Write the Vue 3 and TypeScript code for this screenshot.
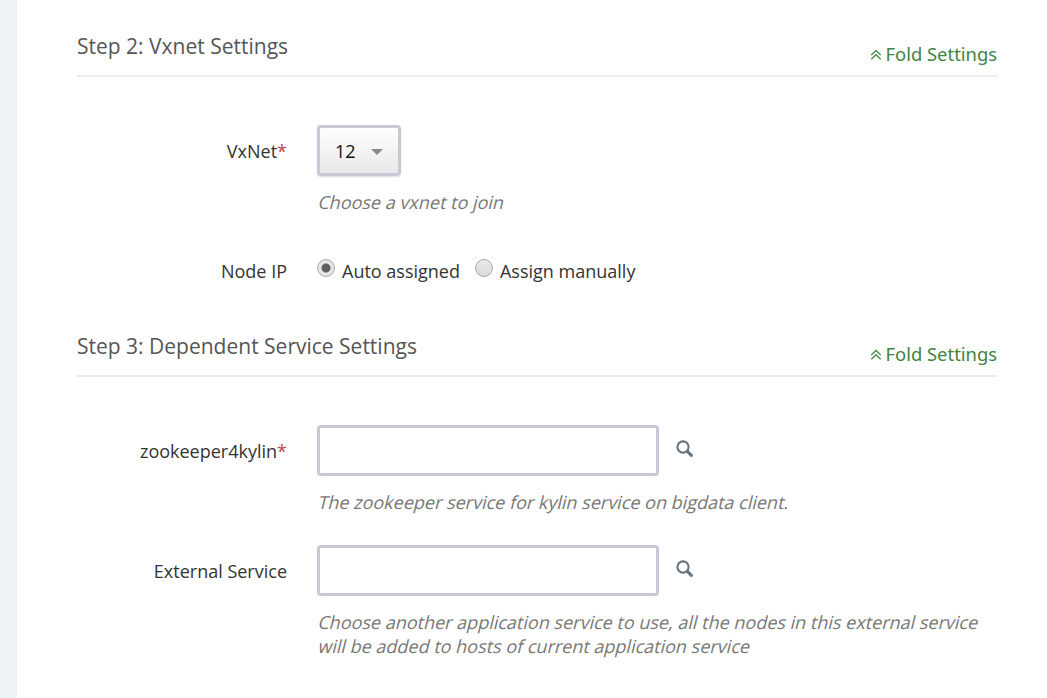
<script setup lang="ts">
interface Field { label: string; required: boolean; help: string[] }
const fields: Field[] = [
  { label: 'zookeeper4kylin', required: true, help: ['The zookeeper service for kylin service on bigdata client.'] },
  { label: 'External Service', required: false, help: ['Choose another application service to use, all the nodes in this external service', 'will be added to hosts of current application service'] },
]
</script>

<template>
  <main class="page">
    <section class="step">
      <header class="head">
        <h2>Step 2: Vxnet Settings</h2>
        <a class="fold"><svg width="12" height="12" viewBox="0 0 12 12"><path d="M1.3 6 6 1.5 10.7 6M1.3 10.3 6 5.8 10.7 10.3" /></svg>Fold Settings</a>
      </header>
      <div class="row vx">
        <label class="label">VxNet<i>*</i></label>
        <div class="control">
          <button class="select"><span>12</span><b class="caret"></b></button>
          <p class="help"><span>Choose a vxnet to join</span></p>
        </div>
      </div>
      <div class="row ip">
        <label class="label">Node IP</label>
        <div class="radios">
          <span class="radio on"></span><span class="auto">Auto assigned</span>
          <span class="radio"></span><span>Assign manually</span>
        </div>
      </div>
    </section>
    <section class="step">
      <header class="head">
        <h2>Step 3: Dependent Service Settings</h2>
        <a class="fold"><svg width="12" height="12" viewBox="0 0 12 12"><path d="M1.3 6 6 1.5 10.7 6M1.3 10.3 6 5.8 10.7 10.3" /></svg>Fold Settings</a>
      </header>
      <div v-for="f in fields" :key="f.label" class="row svc">
        <label class="label">{{ f.label }}<i v-if="f.required">*</i></label>
        <div class="control">
          <div class="line">
            <input type="text" />
            <svg class="search" width="18" height="18" viewBox="0 0 18 18"><circle cx="7" cy="7" r="5.6" /><path d="M11.6 11.6 15.4 15.4" /></svg>
          </div>
          <p class="help"><span v-for="t in f.help" :key="t">{{ t }}</span></p>
        </div>
      </div>
    </section>
  </main>
</template>

<style>
body { background: #fff; overflow: hidden; }
</style>
<style scoped>
* { box-sizing: border-box; }
.page { width: 1047px; height: 698px; border-left: 17px solid #eff3f6; padding: 0 50px 0 60px; background: #fff; overflow: hidden; font: 18px/24px "Open Sans", sans-serif; color: #333; }
.step { height: 300px; }
.head { height: 77px; border-bottom: 2px solid #ebebeb; display: flex; justify-content: space-between; align-items: flex-start; }
h2 { margin: 32px 0 0; font-size: 21px; line-height: 28px; font-weight: 400; color: #555; }
.fold { margin-top: 42px; color: #3f843f; font-family: "Noto Sans", sans-serif; font-size: 18.4px; display: flex; align-items: center; gap: 4px; }
.fold svg { margin-top: 1px; fill: none; stroke: #4b8b4b; stroke-width: 1.4; }
.row { display: flex; }
.label { width: 210px; text-align: right; margin-right: 30px; padding-top: 14px; }
.label i { font-style: normal; color: #b94a48; }
.vx { padding-top: 48px; height: 170px; }
.select { width: 84px; height: 51px; border: 3px solid #cac7d7; border-radius: 4px; background: linear-gradient(#fff, #e8e8e8); display: flex; align-items: center; padding: 0 15px; gap: 15px; font: 18px "Open Sans", sans-serif; color: #111; box-shadow: 0 1px 2px #ddd; }
.caret { margin-top: 2px; border: 6px solid transparent; border-top-color: #888; border-bottom: 0; }
.help { margin: 14px 0 0; color: #777; }
/* Slants the upright face, keeping its double-storey letterforms. */
.help span { display: block; width: max-content; margin-left: 2px; transform: skewX(-14deg); }
.ip .label { padding-top: 12px; }
.radios { display: flex; padding-top: 12px; }
.radio { width: 18px; height: 18px; border: 1px solid #aaa; border-radius: 50%; background: linear-gradient(#e9e9e9, #dadada); margin-right: 7px; }
.radio.on { background: radial-gradient(circle, #606060 0 4px, #e6e6e6 5px); }
.auto { margin-right: 15px; }
.svc { height: 120px; }
.head + .svc { margin-top: 48px; }
.control { width: 680px; }
.line { display: flex; align-items: center; }
input { width: 342px; height: 51px; border: 3px solid #cac7d7; border-radius: 4px; background: #fff; }
.search { margin: 0 0 3px 17px; fill: none; stroke: #667480; stroke-width: 2.1; }
.search path { stroke-width: 3; stroke-linecap: round; }
</style>
